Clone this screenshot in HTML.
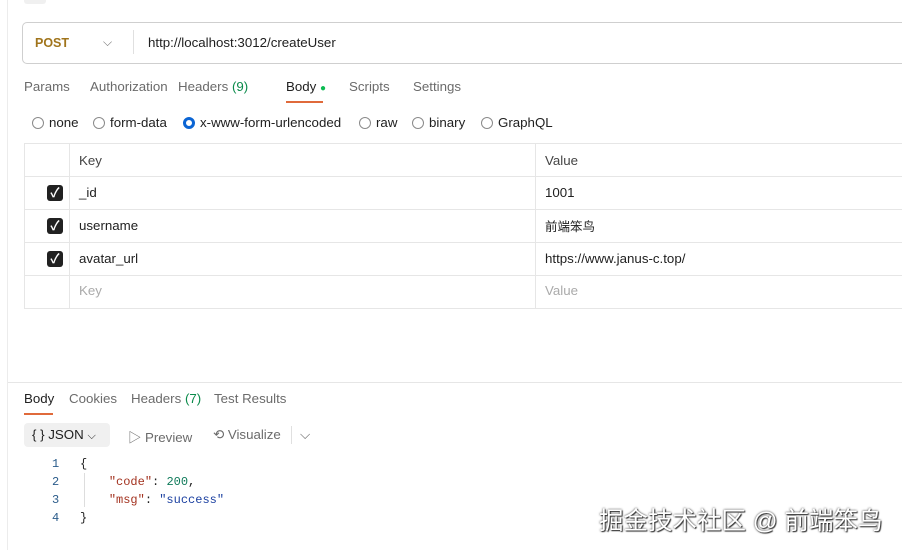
<!DOCTYPE html>
<html><head><meta charset="utf-8"><style>
body{margin:0;width:902px;height:550px;background:#fff;font-family:"Liberation Sans","Noto Sans CJK SC",sans-serif;font-size:13.3px;color:#212121;position:relative;overflow:hidden}
.a{position:absolute;white-space:nowrap}
.g{color:#6b6b6b}
.radio{position:absolute;width:10px;height:10px;border:1px solid #8a8a8a;border-radius:50%;top:117px}
.cb{position:absolute;left:47px;width:16px;height:16px;background:#212121;border-radius:3px;color:#fff;font-size:13px;line-height:16px;text-align:center;font-weight:bold}
.hl{position:absolute;left:24px;right:0;height:1px;background:#e6e6e6}
.vl{position:absolute;width:1px;background:#e6e6e6;top:144px;height:165px}
.mono{font-family:"Liberation Mono",monospace;font-size:12px}
</style></head><body>
<div class="a" style="left:7px;top:0;width:1px;height:550px;background:#ececec"></div>
<div class="a" style="left:24px;top:0;width:22px;height:4px;background:#f0f0f0;border-radius:0 0 3px 3px"></div>
<div class="a" style="left:22px;top:22px;width:890px;height:40px;border:1px solid #cfcfcf;border-radius:5px"></div>
<div class="a" style="left:35px;top:36px;color:#a0741b;font-weight:bold;font-size:12.5px">POST</div>
<div class="a" style="left:103px;top:35px;color:#777;font-size:12px">⌵</div>
<div class="a" style="left:133px;top:30px;width:1px;height:24px;background:#e0e0e0"></div>
<div class="a" style="left:148px;top:35px">http://localhost:3012/createUser</div>
<div class="a g" style="left:24px;top:79px">Params</div>
<div class="a g" style="left:90px;top:79px">Authorization</div>
<div class="a g" style="left:178px;top:79px">Headers <span style="color:#0a8a4a">(9)</span></div>
<div class="a" style="left:286px;top:79px">Body <span style="color:#0cbb52;font-size:10px">●</span></div>
<div class="a" style="left:286px;top:101px;width:37px;height:2px;background:#e06a3b"></div>
<div class="a g" style="left:349px;top:79px">Scripts</div>
<div class="a g" style="left:413px;top:79px">Settings</div>
<div class="radio" style="left:32px"></div><div class="a" style="left:49px;top:115px">none</div>
<div class="radio" style="left:93px"></div><div class="a" style="left:110px;top:115px">form-data</div>
<div class="radio" style="left:183px;border:3px solid #0b65d4;width:6px;height:6px"></div><div class="a" style="left:200px;top:115px">x-www-form-urlencoded</div>
<div class="radio" style="left:359px"></div><div class="a" style="left:376px;top:115px">raw</div>
<div class="radio" style="left:412px"></div><div class="a" style="left:429px;top:115px">binary</div>
<div class="radio" style="left:481px"></div><div class="a" style="left:498px;top:115px">GraphQL</div>
<div class="hl" style="top:143px"></div><div class="hl" style="top:176px"></div><div class="hl" style="top:209px"></div><div class="hl" style="top:242px"></div><div class="hl" style="top:275px"></div><div class="hl" style="top:308px"></div>
<div class="vl" style="left:24px"></div><div class="vl" style="left:69px"></div><div class="vl" style="left:535px"></div>
<div class="a" style="left:79px;top:153px;color:#444">Key</div><div class="a" style="left:545px;top:153px;color:#444">Value</div>
<div class="cb" style="top:185px">✓</div><div class="a" style="left:79px;top:185px">_id</div><div class="a" style="left:545px;top:185px">1001</div>
<div class="cb" style="top:218px">✓</div><div class="a" style="left:79px;top:218px">username</div><div class="a" style="left:545px;top:216px;font-size:12.5px">前端笨鸟</div>
<div class="cb" style="top:251px">✓</div><div class="a" style="left:79px;top:251px">avatar_url</div><div class="a" style="left:545px;top:251px">https://www.janus-c.top/</div>
<div class="a" style="left:79px;top:283px;color:#aaa">Key</div><div class="a" style="left:545px;top:283px;color:#aaa">Value</div>
<div class="a" style="left:8px;top:382px;width:894px;height:1px;background:#e6e6e6"></div>
<div class="a" style="left:24px;top:391px">Body</div>
<div class="a" style="left:24px;top:413px;width:29px;height:2px;background:#e06a3b"></div>
<div class="a g" style="left:69px;top:391px">Cookies</div>
<div class="a g" style="left:131px;top:391px">Headers <span style="color:#0a8a4a">(7)</span></div>
<div class="a g" style="left:214px;top:391px">Test Results</div>
<div class="a" style="left:24px;top:423px;width:86px;height:24px;background:#f0f0f0;border-radius:4px"></div>
<div class="a" style="left:32px;top:427px">{ } JSON <span style="font-size:11px">⌵</span></div>
<div class="a g" style="left:128px;top:427px">▷ Preview</div>
<div class="a g" style="left:213px;top:427px">⟲ Visualize</div>
<div class="a" style="left:291px;top:426px;width:1px;height:18px;background:#e0e0e0"></div>
<div class="a g" style="left:300px;top:427px">⌵</div>
<div class="a mono" style="left:52px;top:455px;color:#2a5b8a;line-height:18px">1<br>2<br>3<br>4</div>
<div class="a" style="left:84px;top:473px;width:1px;height:34px;background:#ddd"></div>
<div class="a mono" style="left:80px;top:455px;line-height:18px">{<br>&nbsp;&nbsp;&nbsp;&nbsp;<span style="color:#a3321f">"code"</span>: <span style="color:#0f7a5a">200</span>,<br>&nbsp;&nbsp;&nbsp;&nbsp;<span style="color:#a3321f">"msg"</span>: <span style="color:#1a3fa0">"success"</span><br>}</div>
<div class="a" style="left:599px;top:502px;font-size:24.5px;color:#fff;text-shadow:0 0 2px #333,1px 1px 1px #333">掘金技术社区 @ 前端笨鸟</div>
</body></html>
